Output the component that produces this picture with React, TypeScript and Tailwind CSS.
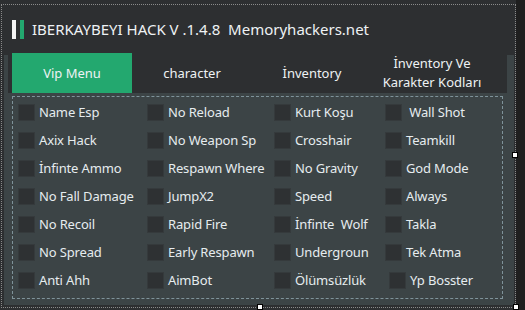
const FONT = { fontFamily: '"Noto Sans", "Open Sans", sans-serif' };

type Item = { label: string; shift?: number };

const rows: Item[][] = [
  [{ label: "Name Esp" }, { label: "No Reload" }, { label: "Kurt Koşu" }, { label: " Wall Shot" }],
  [{ label: "Axix Hack" }, { label: "No Weapon Sp" }, { label: "Crosshair" }, { label: "Teamkill" }],
  [{ label: "İnfinte Ammo" }, { label: "Respawn Where" }, { label: "No Gravity" }, { label: "God Mode" }],
  [{ label: "No Fall Damage" }, { label: "JumpX2" }, { label: "Speed" }, { label: "Always" }],
  [{ label: "No Recoil" }, { label: "Rapid Fire" }, { label: "İnfinte  Wolf" }, { label: "Takla" }],
  [{ label: "No Spread" }, { label: "Early Respawn" }, { label: "Undergroun" }, { label: "Tek Atma" }],
  [{ label: "Anti Ahh" }, { label: "AimBot" }, { label: "Ölümsüzlük" }, { label: "Yp Bosster", shift: 4 }],
];

const cellW = ["w-[129px]", "w-[127px]", "w-[111px]", "w-[110px]"];

function Check({ item, col }: { item: Item; col: number }) {
  return (
    <div className={`${cellW[col]} shrink-0`}>
      <div className={`flex items-center ${item.shift ? "pl-[4px]" : ""}`}>
        <div className="w-[17px] h-[17px] shrink-0 bg-[#2e3133] border border-[#353a3c]" />
        <span className="ml-[4px] whitespace-pre text-[13px] leading-[17px] tracking-[-0.15px] text-[#e6ecef]">
          {item.label}
        </span>
      </div>
    </div>
  );
}

function Handle() {
  return <div className="w-[6px] h-[6px] bg-white border border-black" />;
}

export default function App() {
  const tabs = ["Vip Menu", "character", "İnventory", "İnventory Ve\nKarakter Kodları"];
  return (
    <div className="relative w-[525px] h-[310px] bg-[#2d2f31] overflow-hidden flex" style={FONT}>
      <div className="relative w-[516px] h-[310px] shrink-0">
        {/* header */}
        <div className="flex items-center h-[20px] mt-[19px] ml-[12px]">
          <div className="w-[4px] h-[19px] bg-[#f4f4f4]" />
          <div className="w-[4px] h-[19px] bg-[#23a86f] ml-[4px]" />
          <span className="ml-[8px] whitespace-pre text-[15px] text-[#eef2f4] leading-none">
            IBERKAYBEYI HACK V .1.4.8  Memoryhackers.net
          </span>
        </div>
        {/* panel */}
        <div className="mt-[16px] ml-[4px] w-[510px] h-[250px] bg-[#3c4446] flex">
          {/* tab control */}
          <div className="ml-[4px] -mt-[2px] w-[499px] h-[249px] flex flex-col bg-[#2d2f31]">
            <div className="flex h-[40px] pl-[4px]">
              {tabs.map((t, i) => (
                <div
                  key={i}
                  className={`w-[120px] h-[40px] flex items-center justify-center text-center whitespace-pre text-[13px] leading-[19px] text-[#eef2f4] ${
                    i === 0 ? "bg-[#23a86f]" : ""
                  }`}
                >
                  {t}
                </div>
              ))}
            </div>
            <div className="flex-1 bg-[#3c4446] pl-[4px] pt-[3px]">
              <div className="w-[491px] h-[203px] border border-dashed border-[#7f939a] pl-[5px] pt-[1px]">
                {rows.map((r, ri) => (
                  <div key={ri} className="flex h-[28px] items-center">
                    {r.map((it, ci) => (
                      <Check key={ci} item={it} col={ci} />
                    ))}
                  </div>
                ))}
              </div>
            </div>
          </div>
        </div>
        {/* designer selection border */}
        <div className="absolute left-[1px] top-[4px] w-[515px] h-[304px] border border-dotted border-[#8a8a8a] pointer-events-none" />
        <div className="absolute left-[512px] top-[152px]"><Handle /></div>
        <div className="absolute left-[257px] top-[304px]"><Handle /></div>
        <div className="absolute left-[513px] top-[304px]"><Handle /></div>
      </div>
      <div className="flex-1 bg-[#1f1f1f]" />
    </div>
  );
}
